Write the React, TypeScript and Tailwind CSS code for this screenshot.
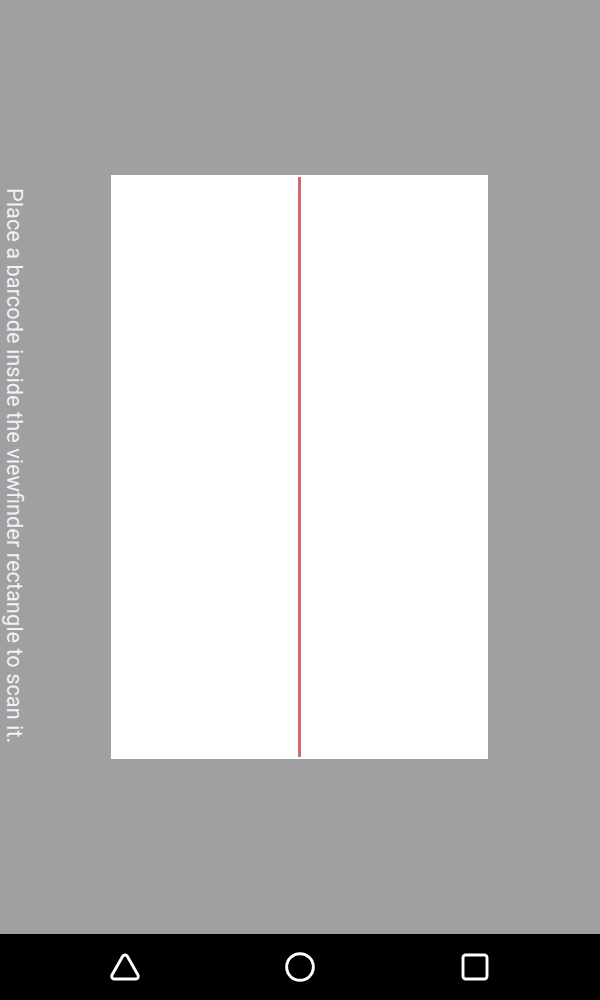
import { Triangle, Circle, Square } from "lucide-react";

export default function App() {
  return (
    <div className="flex h-[1000px] w-[600px] flex-col overflow-hidden bg-[#a09fa1] font-['Roboto',sans-serif]">
      <div className="flex h-[934px] items-start">
        <div className="w-[111px] pl-[1px] pt-[188px]">
          <p className="text-[21.8px] leading-[26px] text-[#f2f2f2] [writing-mode:vertical-rl]">
            Place a barcode inside the viewfinder rectangle to scan it.
          </p>
        </div>
        <div className="mt-[175px] flex h-[584px] w-[377px] justify-center bg-white">
          <div className="mt-[2px] h-[580px] w-[3px] bg-[#d3686a]" />
        </div>
      </div>
      <nav className="flex h-[66px] items-center justify-center bg-black text-white">
        <div className="flex w-[175px] justify-center">
          <Triangle className="h-[32px] w-[32px]" strokeWidth={2.2} />
        </div>
        <div className="flex w-[175px] justify-center">
          <Circle className="h-[32px] w-[32px]" strokeWidth={2.2} />
        </div>
        <div className="flex w-[175px] justify-center">
          <Square className="h-[32px] w-[32px]" strokeWidth={2.2} />
        </div>
      </nav>
    </div>
  );
}
